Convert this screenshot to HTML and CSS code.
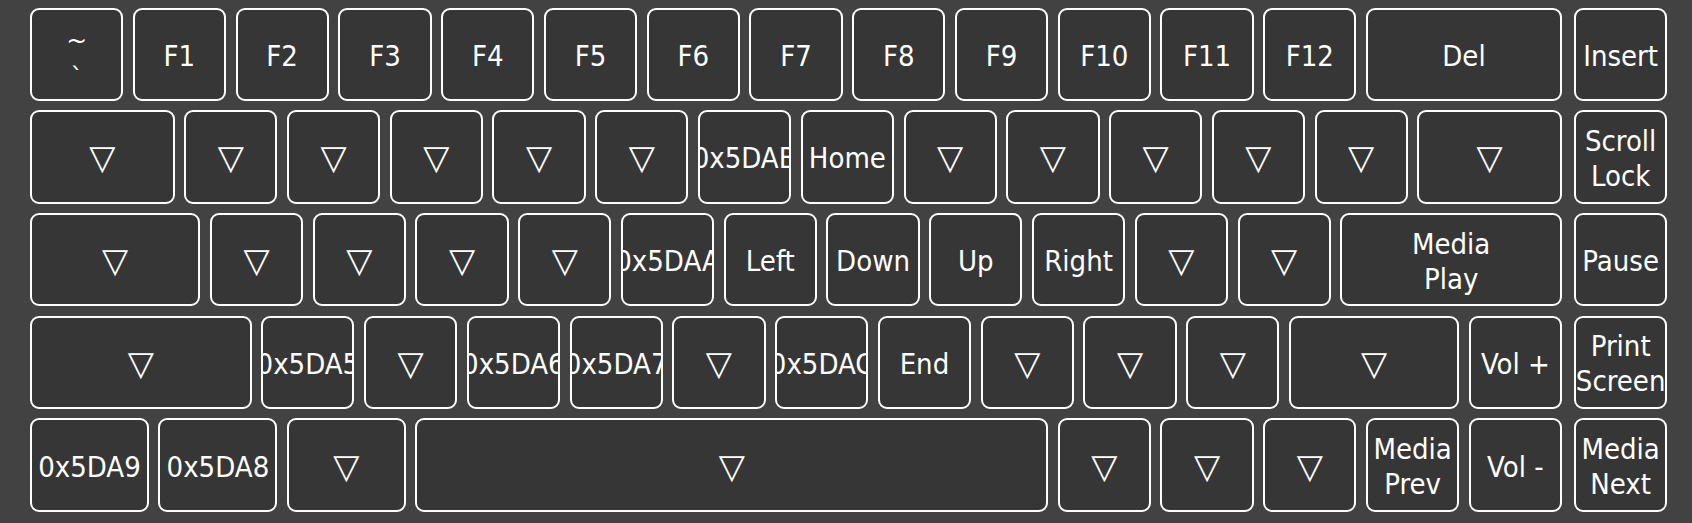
FILE: index.html
```html
<!DOCTYPE html>
<html>
<head>
<meta charset="utf-8">
<link rel="stylesheet" href="styles.css">
</head>
<body>
<div class="board">
  <div class="main">
    <div class="row">
      <div class="key tilde"><span>~<br>`</span></div>
      <div class="key">F1</div>
      <div class="key">F2</div>
      <div class="key">F3</div>
      <div class="key">F4</div>
      <div class="key">F5</div>
      <div class="key">F6</div>
      <div class="key">F7</div>
      <div class="key">F8</div>
      <div class="key">F9</div>
      <div class="key">F10</div>
      <div class="key">F11</div>
      <div class="key">F12</div>
      <div class="key w2">Del</div>
    </div>
    <div class="row">
      <div class="key w15 tri">▽</div>
      <div class="key tri">▽</div>
      <div class="key tri">▽</div>
      <div class="key tri">▽</div>
      <div class="key tri">▽</div>
      <div class="key tri">▽</div>
      <div class="key">0x5DAB</div>
      <div class="key">Home</div>
      <div class="key tri">▽</div>
      <div class="key tri">▽</div>
      <div class="key tri">▽</div>
      <div class="key tri">▽</div>
      <div class="key tri">▽</div>
      <div class="key w15 tri">▽</div>
    </div>
    <div class="row">
      <div class="key w175 tri">▽</div>
      <div class="key tri">▽</div>
      <div class="key tri">▽</div>
      <div class="key tri">▽</div>
      <div class="key tri">▽</div>
      <div class="key">0x5DAA</div>
      <div class="key">Left</div>
      <div class="key">Down</div>
      <div class="key">Up</div>
      <div class="key">Right</div>
      <div class="key tri">▽</div>
      <div class="key tri">▽</div>
      <div class="key w225 two">Media<br>Play</div>
    </div>
    <div class="row">
      <div class="key w225 tri">▽</div>
      <div class="key">0x5DA5</div>
      <div class="key tri">▽</div>
      <div class="key">0x5DA6</div>
      <div class="key">0x5DA7</div>
      <div class="key tri">▽</div>
      <div class="key">0x5DAC</div>
      <div class="key">End</div>
      <div class="key tri">▽</div>
      <div class="key tri">▽</div>
      <div class="key tri">▽</div>
      <div class="key w175 tri">▽</div>
      <div class="key">Vol +</div>
    </div>
    <div class="row">
      <div class="key w125">0x5DA9</div>
      <div class="key w125">0x5DA8</div>
      <div class="key w125 tri">▽</div>
      <div class="key w625 tri">▽</div>
      <div class="key tri">▽</div>
      <div class="key tri">▽</div>
      <div class="key tri">▽</div>
      <div class="key two">Media<br>Prev</div>
      <div class="key">Vol -</div>
    </div>
  </div>
  <div class="side">
    <div class="key">Insert</div>
    <div class="key two">Scroll<br>Lock</div>
    <div class="key">Pause</div>
    <div class="key two">Print<br>Screen</div>
    <div class="key two">Media<br>Next</div>
  </div>
</div>
</body>
</html>
```

FILE: styles.css
```css
:root {
  --u: 102.77px;
  --g: 9.5px;
  --h: 93.2px;
}

html, body {
  margin: 0;
  padding: 0;
  background: #424242;
}

body {
  width: 1692px;
  height: 523px;
  overflow: hidden;
  font-family: "DejaVu Sans Condensed", "DejaVu Sans", sans-serif;
  font-stretch: condensed;
  color: #ffffff;
}

.board {
  display: flex;
  gap: 12px;
  padding: 7.7px 0 0 30px;
}

.main {
  display: flex;
  flex-direction: column;
  gap: var(--g);
}

.row {
  display: flex;
  gap: var(--g);
}

.side {
  display: flex;
  flex-direction: column;
  gap: var(--g);
}

.key {
  box-sizing: border-box;
  width: calc(var(--u) - var(--g));
  height: var(--h);
  flex: none;
  border: 2px solid #ffffff;
  border-radius: 9px;
  background: #363636;
  display: flex;
  align-items: center;
  justify-content: center;
  overflow: hidden;
  white-space: nowrap;
  text-align: center;
  font-size: 29px;
  line-height: 35px;
  padding-top: 4px;
}

.w125 { width: calc(var(--u) * 1.25 - var(--g)); }
.w15 { width: calc(var(--u) * 1.5 - var(--g)); }
.w175 { width: calc(var(--u) * 1.75 - var(--g)); }
.w2 { width: calc(var(--u) * 2 - var(--g)); }
.w225 { width: calc(var(--u) * 2.25 - var(--g)); }
.w625 { width: calc(var(--u) * 6.25 - var(--g)); }

.tri {
  font-family: "DejaVu Sans", sans-serif;
  font-stretch: normal;
  font-size: 34px;
  padding-top: 2px;
}

.tilde span {
  font-family: "DejaVu Sans", sans-serif;
  font-stretch: normal;
  font-size: 25px;
  line-height: 36px;
  display: block;
  margin-top: 4.5px;
}
```
